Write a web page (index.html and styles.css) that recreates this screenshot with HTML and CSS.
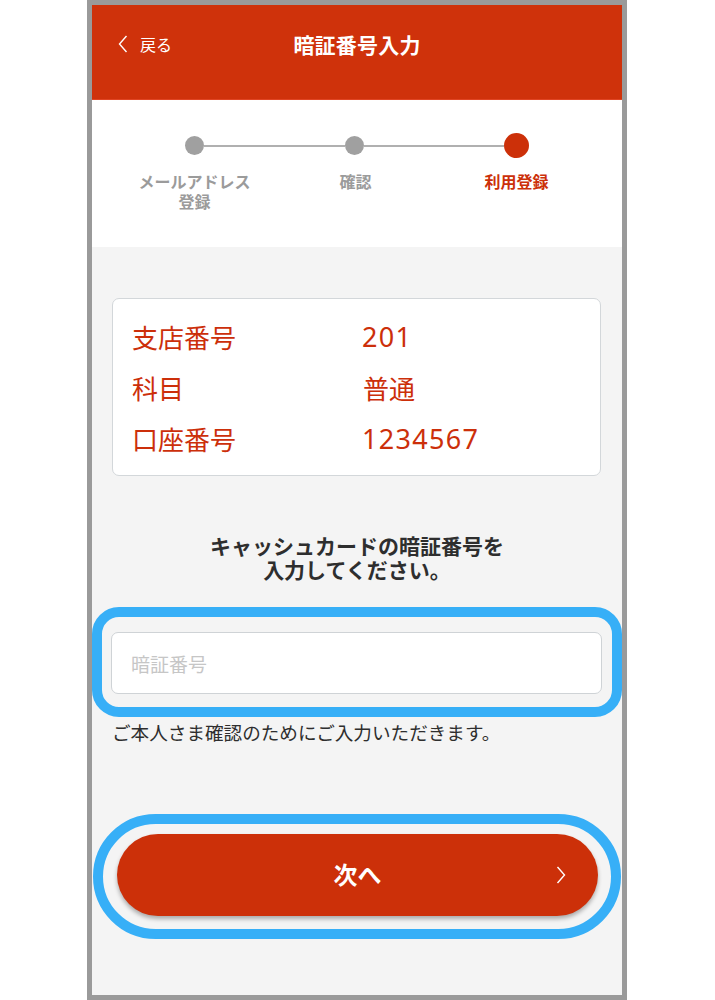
FILE: index.html
```html
<!DOCTYPE html>
<html lang="ja">
<head>
<meta charset="utf-8">
<title>暗証番号入力</title>
<link rel="stylesheet" href="styles.css">
</head>
<body>
<div class="phone">
  <header class="app-header">
    <a class="back">
      <svg class="back-icon" width="10" height="18" viewBox="0 0 10 18"><polyline points="8.5,1 1.5,9 8.5,17" fill="none" stroke="#fff" stroke-width="1.4"/></svg>
      <span>戻る</span>
    </a>
    <h1 class="title">暗証番号入力</h1>
    <span></span>
  </header>

  <section class="stepper">
    <div class="track">
      <span class="dot"></span>
      <span class="seg"></span>
      <span class="dot"></span>
      <span class="seg"></span>
      <span class="dot dot-active"></span>
    </div>
    <div class="labels">
      <div class="label"><span class="line">メールアドレス</span><span class="line">登録</span></div>
      <div class="label"><span class="line">確認</span></div>
      <div class="label label-active"><span class="line">利用登録</span></div>
    </div>
  </section>

  <main class="body">
    <div class="card">
      <div class="row"><span class="k">支店番号</span><span class="v num">201</span></div>
      <div class="row"><span class="k">科目</span><span class="v">普通</span></div>
      <div class="row"><span class="k">口座番号</span><span class="v num">1234567</span></div>
    </div>

    <p class="lead"><span class="line">キャッシュカードの暗証番号を</span><span class="line">入力してください。</span></p>

    <div class="ring-wrap ring-input">
      <div class="input"><span class="placeholder">暗証番号</span></div>
    </div>

    <p class="help">ご本人さま確認のためにご入力いただきます。</p>

    <div class="ring-wrap ring-button">
      <button class="next">
        <span class="next-text">次へ</span>
        <svg class="next-icon" width="10" height="18" viewBox="0 0 10 18"><polyline points="1.5,1 8.5,9 1.5,17" fill="none" stroke="#fff" stroke-width="1.4"/></svg>
      </button>
    </div>
  </main>
</div>
</body>
</html>
```

FILE: styles.css
```css
* { box-sizing: border-box; }
html, body { margin: 0; padding: 0; background: #fff; }
body {
  font-family: "Noto Sans CJK JP", "Noto Sans", sans-serif;
  width: 715px;
  height: 1000px;
  overflow: hidden;
}
.phone {
  margin-left: 87px;
  width: 540px;
  height: 1000px;
  border: 5px solid #9a9a9a;
  background: #f4f4f4;
  overflow: hidden;
  display: flex;
  flex-direction: column;
}
.app-header {
  height: 95px;
  background: #cf320b;
  border-bottom: 1px solid #e04523;
  display: grid;
  grid-template-columns: 1fr auto 1fr;
  align-items: center;
  color: #fff;
  padding: 0 26px 17px 26px;
}
.back {
  display: flex;
  align-items: center;
  gap: 12px;
  font-size: 16px;
  line-height: 20px;
}
.back-icon { display: block; }
.title {
  margin: 0;
  font-size: 21px;
  font-weight: 700;
  line-height: 24px;
  letter-spacing: 0.2px;
}
.stepper {
  background: #fff;
  height: 147px;
  padding-top: 33px;
}
.track {
  display: flex;
  align-items: center;
  padding: 0 93px 0 93px;
  height: 25px;
}
.dot {
  width: 19px;
  height: 19px;
  border-radius: 50%;
  background: #a0a0a0;
  flex: none;
}
.dot-active {
  width: 25px;
  height: 25px;
  background: #cc3009;
}
.seg {
  flex: 1;
  height: 2px;
  background: #b0b0b0;
}
.labels {
  display: grid;
  grid-template-columns: repeat(3, 161px);
  padding-left: 22px;
  margin-top: 12px;
}
.label {
  text-align: center;
  font-size: 16px;
  font-weight: 700;
  color: #9b9b9b;
  display: flex;
  flex-direction: column;
  align-items: center;
}
.label .line { display: block; height: 20px; line-height: 23px; }
.label-active { color: #cc3009; }
.body {
  flex: 1;
  display: flex;
  flex-direction: column;
}
.card {
  margin: 51px 21px 0 20px;
  height: 178px;
  background: #fff;
  border: 1px solid #d3d7da;
  border-radius: 7px;
  padding: 12px 19px 0 19px;
}
.row {
  display: grid;
  grid-template-columns: 231px 1fr;
  align-items: center;
  height: 51px;
  color: #cc2f0a;
  font-size: 26px;
  line-height: 30px;
}
.num {
  font-family: "Noto Sans", "Noto Sans CJK JP", sans-serif;
  font-size: 27px;
  letter-spacing: 1.3px;
  margin-left: -1px;
}
.lead {
  margin: 56px 0 0 0;
  text-align: center;
  font-size: 21px;
  font-weight: 700;
  color: #2e2e2e;
  display: flex;
  flex-direction: column;
  align-items: center;
}
.lead .line { display: block; height: 23.5px; line-height: 26px; }
.ring-wrap { position: relative; }
.ring-wrap::after {
  content: "";
  position: absolute;
  border: 10px solid #37aff7;
  pointer-events: none;
}
.ring-input {
  margin: 53px 20px 0 19px;
}
.ring-input::after {
  top: -25px; bottom: -23px; left: -19px; right: -20px;
  border-radius: 27px;
}
.input {
  height: 62px;
  background: #fff;
  border: 1.5px solid #cfd3d6;
  border-radius: 7px;
  display: flex;
  align-items: center;
  padding-left: 19px;
}
.placeholder {
  font-size: 19px;
  color: #c6c6c6;
}
.help {
  margin: 26px 0 0 20px;
  font-size: 18.6px;
  line-height: 24px;
  color: #2e2e2e;
}
.ring-button {
  margin: 90px 24px 0 25px;
}
.ring-button::after {
  top: -20px; bottom: -23px; left: -24px; right: -23px;
  border-radius: 999px;
}
.next {
  width: 100%;
  height: 82px;
  border: none;
  border-radius: 41px;
  background: #cc3009;
  box-shadow: 0 3px 4px rgba(0,0,0,0.3);
  color: #fff;
  font-family: inherit;
  display: flex;
  align-items: center;
  justify-content: center;
  position: relative;
  padding: 0;
}
.next-text {
  font-size: 24px;
  font-weight: 700;
  line-height: 28px;
  margin-top: -2px;
}
.next-icon {
  position: absolute;
  right: 32px;
  top: 32px;
}
```
